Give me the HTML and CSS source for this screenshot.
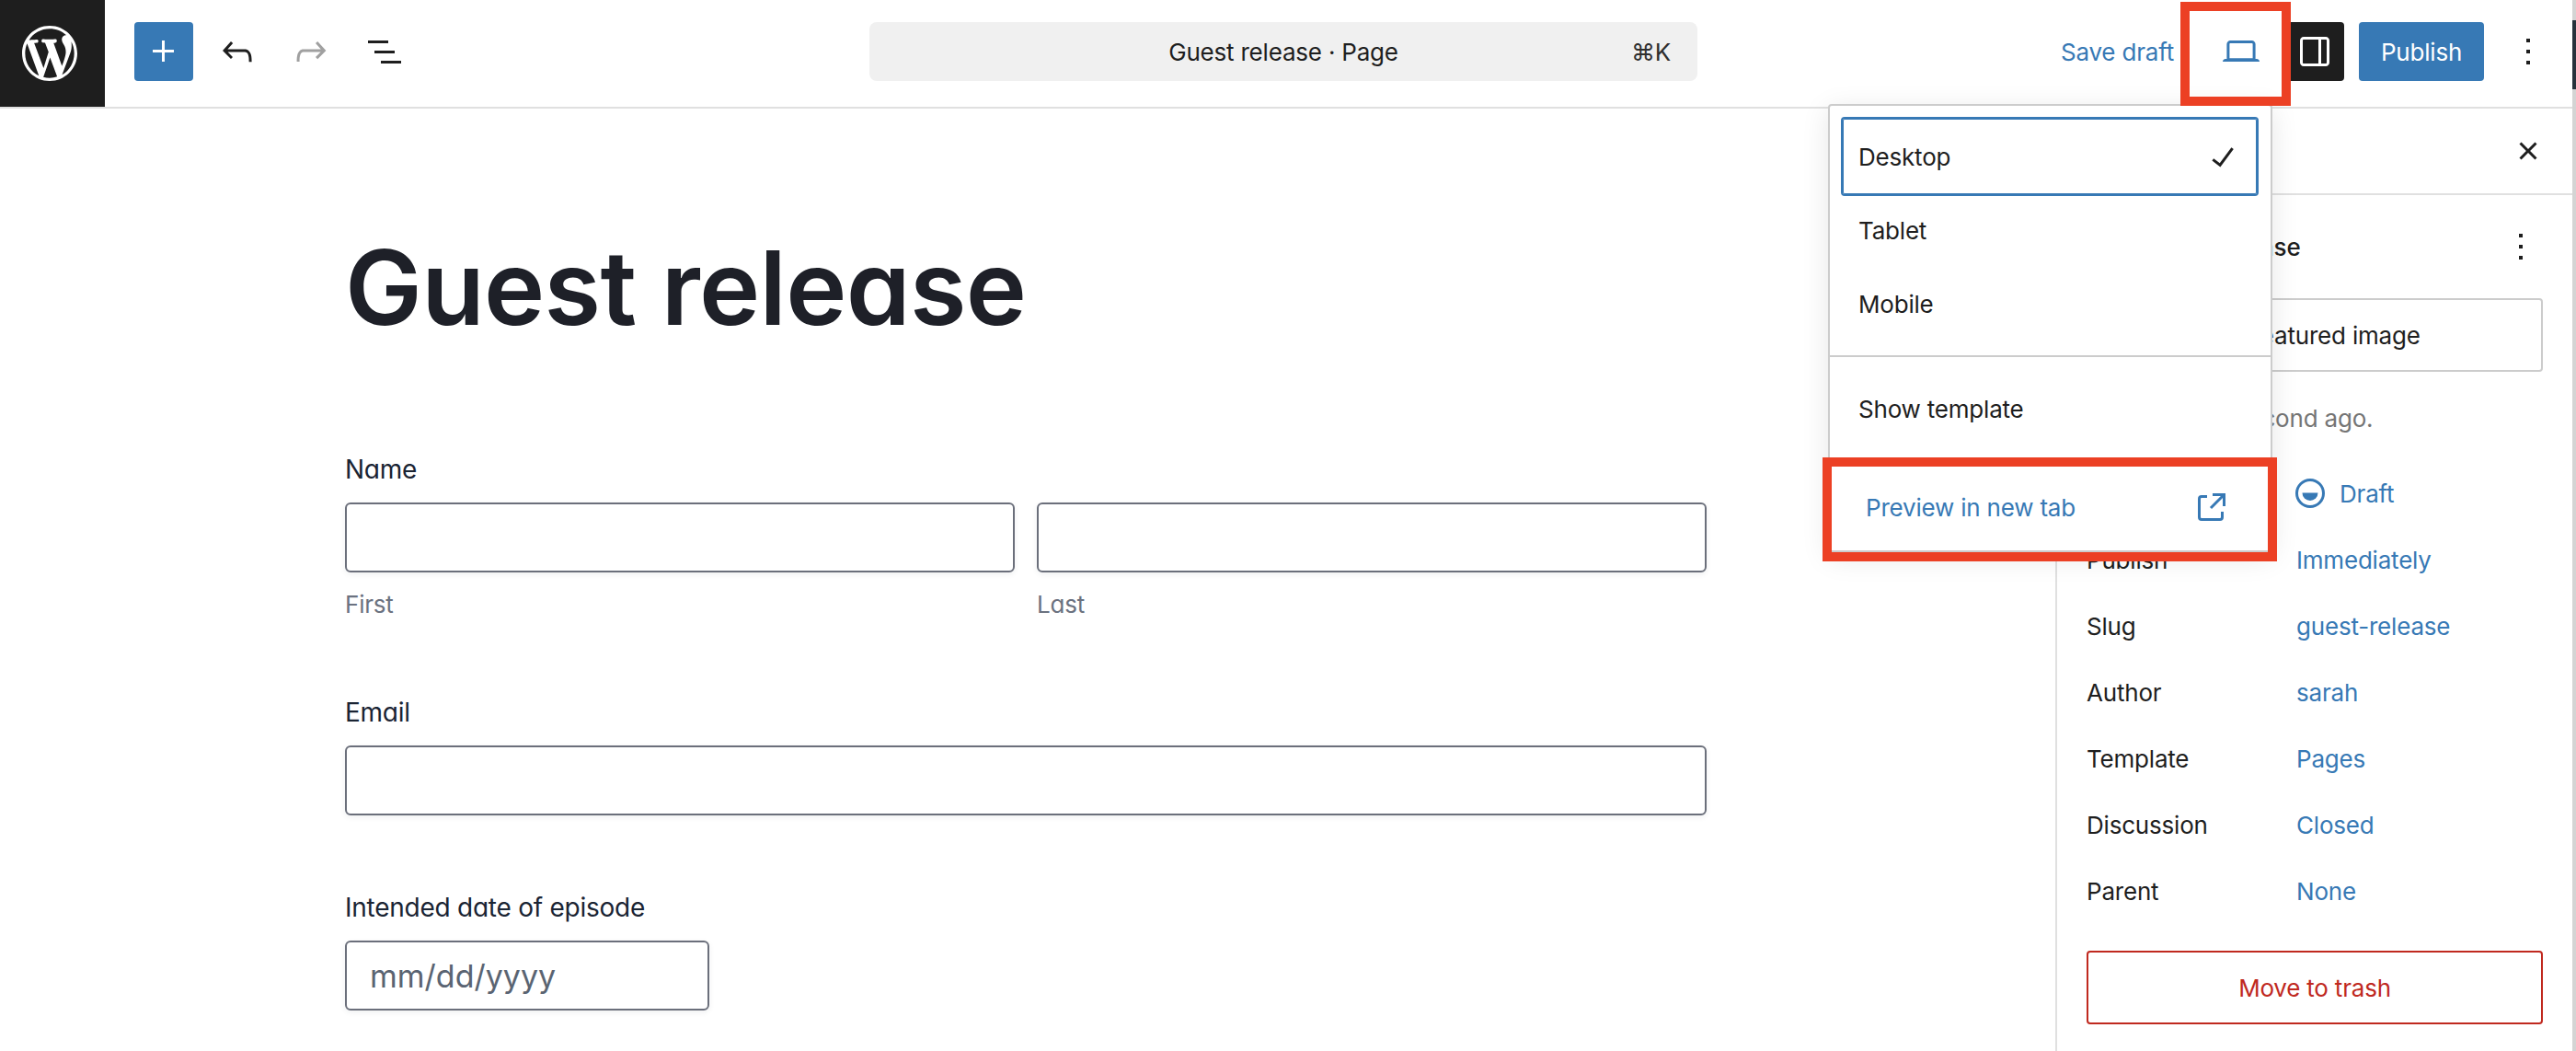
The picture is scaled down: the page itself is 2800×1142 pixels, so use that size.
FILE: index.html
```html
<!DOCTYPE html>
<html lang="en">
<head>
<meta charset="utf-8">
<title>Guest release · Page</title>
<link rel="stylesheet" href="styles.css">
</head>
<body>
<div class="app">
  <header class="topbar">
    <div class="topbar-left">
      <a class="wp-logo"><svg class="wp-mark" viewBox="0 0 20 20"><path d="M20 10c0-5.51-4.49-10-10-10C4.48 0 0 4.49 0 10c0 5.52 4.48 10 10 10 5.51 0 10-4.48 10-10zM7.78 15.37L4.37 6.22c.55-.02 1.17-.08 1.17-.08.5-.06.44-1.13-.06-1.11 0 0-1.45.11-2.37.11-.18 0-.37 0-.58-.01C4.12 2.69 6.87 1.11 10 1.11c2.33 0 4.45.87 6.05 2.34-.68-.11-1.65.39-1.65 1.58 0 .74.45 1.36.9 2.1.35.61.55 1.36.55 2.46 0 1.49-1.4 5-1.4 5l-3.03-8.37c.54-.02.82-.17.82-.17.5-.05.44-1.25-.06-1.22 0 0-1.44.12-2.38.12-.87 0-2.33-.12-2.33-.12-.5-.03-.56 1.2-.06 1.22l.92.08 1.26 3.41zM17.41 10c.24-.64.74-1.87.43-4.25.7 1.29 1.05 2.71 1.05 4.25 0 3.29-1.73 6.24-4.4 7.78.97-2.59 1.94-5.2 2.92-7.78zM6.1 18.09C3.12 16.65 1.11 13.53 1.11 10c0-1.3.23-2.48.72-3.59C3.25 10.3 4.67 14.2 6.1 18.09zm4.03-6.63l2.58 6.98c-.86.29-1.76.45-2.71.45-.79 0-1.57-.11-2.29-.33.81-2.38 1.62-4.74 2.42-7.1z"/></svg></a>
      <div class="tools">
        <button class="icon-btn primary"><svg class="icon" viewBox="0 0 24 24"><path d="M11 12.5V17.5H12.5V12.5H17.5V11H12.5V6H11V11H6V12.5H11Z"/></svg></button>
        <button class="icon-btn"><svg class="icon" viewBox="0 0 24 24"><path d="M18.3 11.7c-.6-.6-1.4-.9-2.3-.9H6.7l2.9-3.3-1.1-1-4.5 5L8.5 16l1-1-2.7-2.7H16c.5 0 .9.2 1.3.5 1 1 1 3.4 1 4.5v.3h1.5v-.2c0-1.5 0-4.3-1.5-5.7z"/></svg></button>
        <button class="icon-btn muted"><svg class="icon" viewBox="0 0 24 24"><path d="M15.6 6.5l-1.1 1 2.9 3.3H8c-.9 0-1.7.3-2.3.9-1.4 1.5-1.4 4.2-1.4 5.6v.2h1.5v-.3c0-1.1 0-3.5 1-4.5.3-.3.7-.5 1.3-.5h9.2L14.5 15l1.1 1.1 4.6-4.6-4.6-5z"/></svg></button>
        <button class="icon-btn"><svg class="icon" viewBox="0 0 24 24"><path d="M3 6h11v1.5H3V6Zm3.5 5.5h11V13h-11v-1.5ZM21 17H10v1.5h11V17Z"/></svg></button>
      </div>
    </div>
    <div class="command-bar">
      <span class="command-title">Guest release · Page</span>
      <span class="command-key">⌘K</span>
    </div>
    <div class="topbar-right">
      <button class="text-btn">Save draft</button>
      <button class="icon-btn accent"><svg class="icon" viewBox="0 0 24 24"><path d="M20.5 16h-.7V8c0-1.1-.9-2-2-2H6.2c-1.1 0-2 .9-2 2v8h-.7c-.8 0-1.5.7-1.5 1.5h20c0-.8-.7-1.5-1.5-1.5zM5.7 8c0-.3.2-.5.5-.5h11.6c.3 0 .5.2.5.5v7.6H5.7V8z"/></svg></button>
      <button class="icon-btn dark"><svg class="icon" viewBox="0 0 24 24"><path d="M18 4H6c-1.1 0-2 .9-2 2v12c0 1.1.9 2 2 2h12c1.1 0 2-.9 2-2V6c0-1.1-.9-2-2-2zm-4 14.5H6c-.3 0-.5-.2-.5-.5V6c0-.3.2-.5.5-.5h8v13zm4.5-.5c0 .3-.2.5-.5.5h-2.5v-13H18c.3 0 .5.2.5.5v12z"/></svg></button>
      <button class="publish-btn">Publish</button>
      <button class="icon-btn"><svg class="icon" viewBox="0 0 24 24"><path d="M13 19h-2v-2h2v2zm0-6h-2v-2h2v2zm0-6h-2V5h2v2z"/></svg></button>
    </div>
  </header>

  <div class="workspace">
    <main class="canvas">
      <h1 class="page-title">Guest release</h1>
      <section class="field field-name">
        <div class="field-label">Name</div>
        <div class="name-row">
          <div class="name-col"><div class="input"></div><div class="hint">First</div></div>
          <div class="name-col"><div class="input"></div><div class="hint">Last</div></div>
        </div>
      </section>
      <section class="field field-email">
        <div class="field-label">Email</div>
        <div class="input"></div>
      </section>
      <section class="field field-date">
        <div class="field-label">Intended date of episode</div>
        <div class="input input-date">mm/dd/yyyy</div>
      </section>
    </main>

    <aside class="sidebar">
      <div class="sidebar-tabs">
        <span class="tab">Page</span>
        <svg class="icon" viewBox="0 0 24 24"><path d="M12 13.06l3.712 3.713 1.061-1.06L13.061 12l3.712-3.712-1.06-1.06L12 10.938 8.288 7.227l-1.061 1.06L10.939 12l-3.712 3.712 1.06 1.061L12 13.061z"/></svg>
      </div>
      <div class="sidebar-body">
        <div class="doc-head">
          <span class="doc-name">
            <svg class="icon" viewBox="0 0 24 24"><path d="M15.5 7.5h-7V9h7V7.5Zm-7 3.5h7v1.5h-7V11Zm7 3.5h-7V16h7v-1.5Z"/><path d="M17 4H7a2 2 0 0 0-2 2v12a2 2 0 0 0 2 2h10a2 2 0 0 0 2-2V6a2 2 0 0 0-2-2Zm-10 1.5h10a.5.5 0 0 1 .5.5v12a.5.5 0 0 1-.5.5H7a.5.5 0 0 1-.5-.5V6a.5.5 0 0 1 .5-.5Z"/></svg>
            <span class="doc-title">Guest release</span>
          </span>
          <svg class="icon" viewBox="0 0 24 24"><path d="M13 19h-2v-2h2v2zm0-6h-2v-2h2v2zm0-6h-2V5h2v2z"/></svg>
        </div>
        <button class="featured-btn">Set featured image</button>
        <p class="edited">Last edited a second ago.</p>
        <dl class="meta">
          <div class="meta-row"><dt>Status</dt><dd class="status"><svg class="status-icon" viewBox="0 0 32 32"><circle cx="16" cy="16" r="14.5"/><path class="status-fill" d="M7.5 15.5h17a8.5 8.5 0 0 1-17 0z"/></svg>Draft</dd></div>
          <div class="meta-row"><dt>Publish</dt><dd>Immediately</dd></div>
          <div class="meta-row"><dt>Slug</dt><dd>guest-release</dd></div>
          <div class="meta-row"><dt>Author</dt><dd>sarah</dd></div>
          <div class="meta-row"><dt>Template</dt><dd>Pages</dd></div>
          <div class="meta-row"><dt>Discussion</dt><dd>Closed</dd></div>
          <div class="meta-row"><dt>Parent</dt><dd>None</dd></div>
        </dl>
        <button class="trash-btn">Move to trash</button>
      </div>
    </aside>
  </div>

  <div class="view-menu">
    <div class="menu-group">
      <div class="menu-item selected"><span>Desktop</span><svg class="icon" viewBox="0 0 24 24"><path d="M16.7 7.1l-6.3 8.5-3.3-2.5-.9 1.2 4.5 3.4L17.9 8z"/></svg></div>
      <div class="menu-item">Tablet</div>
      <div class="menu-item">Mobile</div>
    </div>
    <div class="menu-group menu-group-template">
      <div class="menu-item">Show template</div>
    </div>
    <div class="menu-item preview"><span>Preview in new tab</span><svg class="icon" viewBox="0 0 24 24"><path d="M19.5 4.5h-7V6h4.44l-5.97 5.97 1.06 1.06L18 7.06v4.44h1.5v-7Zm-13 1a2 2 0 0 0-2 2v10a2 2 0 0 0 2 2h10a2 2 0 0 0 2-2v-3H17v3a.5.5 0 0 1-.5.5h-10a.5.5 0 0 1-.5-.5v-10a.5.5 0 0 1 .5-.5h3V5.5h-3Z"/></svg></div>
  </div>

  <div class="callout callout-view"></div>
  <div class="callout callout-preview"></div>
  <div class="scroll-edge"><div class="scroll-thumb"></div></div>
</div>
</body>
</html>
```
FILE: styles.css
```css
* { box-sizing: border-box; }
html, body { margin: 0; padding: 0; height: 100%; background: #fff; overflow: hidden; }
body { font-family: Inter, "Liberation Sans", sans-serif; font-size: 26px; letter-spacing: -0.2px; color: #1e1e1e; }
button { font: inherit; letter-spacing: inherit; border: 0; background: none; padding: 0; color: inherit; }
.app { position: relative; width: 2800px; height: 1142px; overflow: hidden; display: flex; flex-direction: column; }
.icon { width: 48px; height: 48px; fill: currentColor; flex: none; display: block; }

.topbar { height: 118px; flex: none; display: flex; align-items: flex-start; border-bottom: 2px solid #e0e0e0; }
.topbar-left { width: 945px; flex: none; display: flex; }
.wp-logo { width: 114px; height: 116px; padding-right: 6px; background: #1e1e1e; display: flex; align-items: center; justify-content: center; }
.wp-mark { width: 60px; height: 60px; fill: #fff; }
.tools { display: flex; gap: 16px; padding: 24px 0 0 32px; }
.icon-btn { width: 64px; height: 64px; border-radius: 4px; display: flex; align-items: center; justify-content: center; }
.icon-btn.primary { background: #3779b5; color: #fff; }
.icon-btn.muted { color: #a0a0a0; }
.icon-btn.accent { color: #3779b5; }
.icon-btn.dark { background: #1e1e1e; color: #fff; }
.command-bar { width: 900px; height: 64px; margin-top: 24px; flex: none; background: #f0f0f0; border-radius: 8px; position: relative; display: flex; align-items: center; justify-content: center; }
.command-title { color: #1e1e1e; }
.command-key { position: absolute; right: 29px; top: 50%; transform: translateY(-50%); color: #2f2f2f; }
.topbar-right { flex: 1; display: flex; justify-content: flex-end; gap: 16px; padding: 24px 20px 0 0; }
.text-btn { height: 64px; color: #3779b5; margin-right: 25px; }
.publish-btn { width: 136px; height: 64px; background: #3779b5; color: #fff; border-radius: 4px; }

.workspace { flex: 1; display: flex; min-height: 0; }
.canvas { flex: 1; padding: 134px 0 0 375px; min-width: 0; }
.page-title { margin: 0; font-size: 112px; line-height: 120px; font-weight: 600; color: #1e2028; letter-spacing: -0.7px; font-feature-settings: "cv11"; }
.field { width: 1480px; color: #1a2433; font-feature-settings: "cv11"; }
.field-name { margin-top: 120px; }
.field-email { margin-top: 83px; }
.field-date { margin-top: 82px; }
.field-label { font-size: 28px; letter-spacing: -0.25px; line-height: 36px; height: 36px; margin-bottom: 18px; }
.name-row { display: flex; gap: 24px; }
.name-col { flex: 1; min-width: 0; }
.input { height: 76px; border: 2px solid #6b6f7b; border-radius: 6px; background: #fff; box-shadow: 0 2px 6px rgba(30, 40, 60, 0.07); }
.hint { margin-top: 19px; font-size: 26px; line-height: 32px; color: #6b7280; }
.input-date { width: 396px; padding: 0 25px; display: flex; align-items: center; font-size: 34px; letter-spacing: 0; color: #5a6472; }

.sidebar { width: 566px; flex: none; border-left: 2px solid #e0e0e0; padding-right: 4px; }
.sidebar-tabs { height: 94px; border-bottom: 2px solid #e0e0e0; display: flex; align-items: center; justify-content: space-between; padding: 0 24px 0 32px; }
.tab { font-weight: 500; }
.sidebar-body { padding: 0 32px; }
.doc-head { height: 112px; display: flex; align-items: center; justify-content: space-between; }
.doc-name { display: flex; align-items: center; gap: 16px; font-weight: 500; }
.featured-btn { display: block; width: 100%; height: 80px; border: 2px solid #ccc; border-radius: 4px; background: #fff; }
.edited { margin: 33px 0 0; line-height: 36px; color: #757575; }
.meta { margin: 27px 0 0; }
.meta-row { height: 72px; display: flex; align-items: center; }
.meta-row dt { width: 228px; flex: none; }
.meta-row dd { margin: 0; color: #3779b5; }
.status { display: flex; align-items: center; gap: 16px; }
.status-icon { width: 32px; height: 32px; margin-left: -1px; fill: none; stroke: #3779b5; stroke-width: 3; }
.status-fill { fill: #3779b5; stroke: none; }
.trash-btn { display: block; width: 100%; height: 80px; margin-top: 29px; border: 2px solid #c0291f; border-radius: 4px; color: #c0291f; background: #fff; }

.view-menu { position: absolute; left: 1987px; top: 113px; width: 483px; height: 487px; background: #fff; border: 2px solid #ccc; border-radius: 4px; box-shadow: 0 6px 30px rgba(0, 0, 0, 0.1); }
.menu-group { padding: 12px 13px 0 12px; }
.menu-group-template { border-top: 2px solid #ccc; margin-top: 16px; padding-top: 16px; }
.menu-item { height: 80px; display: flex; align-items: center; justify-content: space-between; padding: 0 13px 0 19px; }
.menu-item.selected { height: 86px; border: 2px solid #3779b5; border-radius: 4px; margin-bottom: -3px; padding: 0 13px 0 17px; box-shadow: inset 0 0 0 1px #3779b5; }
.menu-item.preview { color: #3779b5; padding: 0 40px 0 39px; margin-top: 27px; }

.callout { position: absolute; border-style: solid; border-color: #ec4024; pointer-events: none; }
.callout-view { left: 2370px; top: 2px; width: 120px; height: 113px; border-width: 10px; }
.callout-preview { left: 1981px; top: 497px; width: 494px; height: 113px; border-width: 10px; }
.scroll-edge { position: absolute; right: 0; top: 0; bottom: 0; width: 4px; background: #d4d4d4; }
.scroll-thumb { height: 75px; margin-top: 22px; background: #27323c; }
```
